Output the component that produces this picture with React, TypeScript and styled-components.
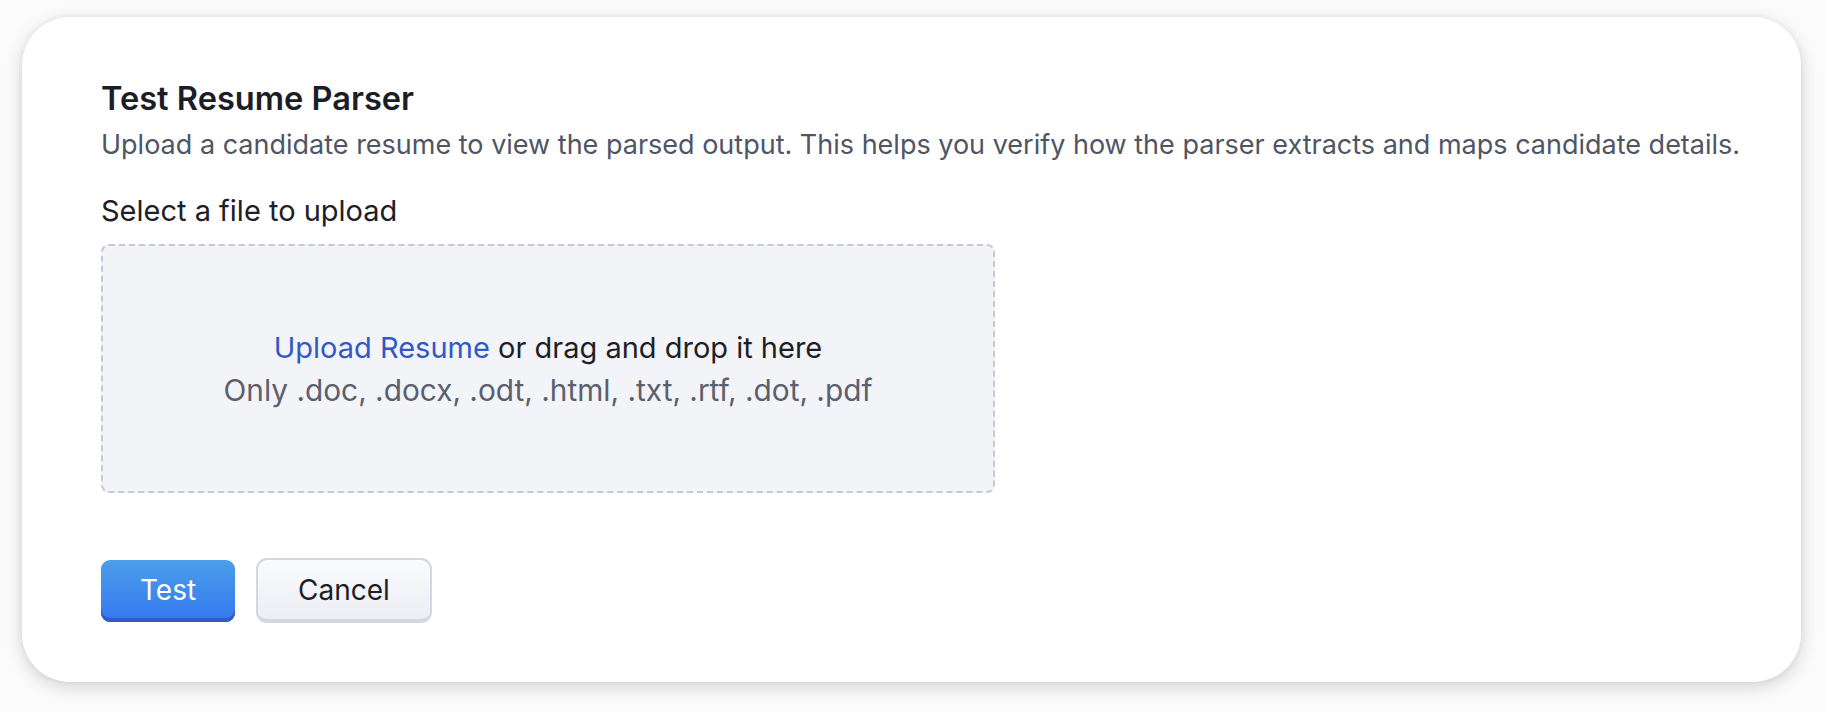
import React from 'react'
import styled, { createGlobalStyle } from 'styled-components'

const GlobalStyle = createGlobalStyle`
  html, body {
    margin: 0;
    padding: 0;
    background: #fbfbfb;
    font-family: Inter, 'Noto Sans', sans-serif;
  }
`

const Page = styled.div`
  width: 1826px;
  height: 712px;
  box-sizing: border-box;
  padding: 17px 25px 0 22px;
`

const Card = styled.section`
  box-sizing: border-box;
  height: 665px;
  background: #ffffff;
  border-radius: 48px;
  box-shadow: 0 5px 18px rgba(0, 0, 0, 0.16), 0 0 6px rgba(0, 0, 0, 0.05);
  padding: 61px 79px 0;
  display: flex;
  flex-direction: column;
`

const Title = styled.h2`
  margin: 0;
  font-size: 32.6px;
  line-height: 40px;
  font-weight: 600;
  color: #1b1e27;
`

const Subtitle = styled.p`
  margin: 10px 0 0;
  font-size: 27px;
  line-height: 34px;
  color: #4f5565;
  white-space: nowrap;
`

const FieldLabel = styled.div`
  margin-top: 31px;
  font-size: 29px;
  line-height: 36px;
  color: #1d2028;
`

const DropZone = styled.div`
  box-sizing: border-box;
  margin-top: 15px;
  width: 894px;
  height: 249px;
  border: 2px dashed #c6c8d3;
  border-radius: 8px;
  background: #f3f4f8;
  display: flex;
  flex-direction: column;
  align-items: center;
  justify-content: center;
  line-height: 43px;
`

const DropLine = styled.div<{ $muted?: boolean }>`
  color: ${(p) => (p.$muted ? '#5b606f' : '#1d1f26')};
  font-size: ${(p) => (p.$muted ? '29.8px' : '29px')};
  white-space: nowrap;
`

const UploadLink = styled.span`
  color: #3059c6;
  cursor: pointer;
`

const Actions = styled.div`
  margin-top: 65px;
  display: flex;
  align-items: center;
  gap: 21px;
`

const Button = styled.button<{ $primary?: boolean }>`
  box-sizing: border-box;
  font-family: inherit;
  font-size: 28px;
  cursor: pointer;
  display: flex;
  align-items: center;
  justify-content: center;
  ${(p) =>
    p.$primary
      ? `
    width: 134px;
    height: 62px;
    color: #ffffff;
    border: none;
    border-radius: 9px;
    background: linear-gradient(#4b9fea, #3477ef);
    box-shadow: inset 0 -4px 0 #2a60c6;
    padding-bottom: 3px;
  `
      : `
    width: 176px;
    height: 65px;
    color: #1d1f26;
    border: 2px solid #d4d6e1;
    border-bottom-width: 4px;
    border-radius: 11px;
    background: linear-gradient(#fafbfd, #eceef5);
  `}
`

const App: React.FC = () => {
  return (
    <>
      <GlobalStyle />
      <Page>
        <Card>
          <Title>Test Resume Parser</Title>
          <Subtitle>
            Upload a candidate resume to view the parsed output. This helps you verify how the parser extracts and maps
            candidate details.
          </Subtitle>
          <FieldLabel>Select a file to upload</FieldLabel>
          <DropZone>
            <DropLine>
              <UploadLink>Upload Resume</UploadLink> or drag and drop it here
            </DropLine>
            <DropLine $muted>Only .doc, .docx, .odt, .html, .txt, .rtf, .dot, .pdf</DropLine>
          </DropZone>
          <Actions>
            <Button $primary>Test</Button>
            <Button>Cancel</Button>
          </Actions>
        </Card>
      </Page>
    </>
  )
}

export default App
